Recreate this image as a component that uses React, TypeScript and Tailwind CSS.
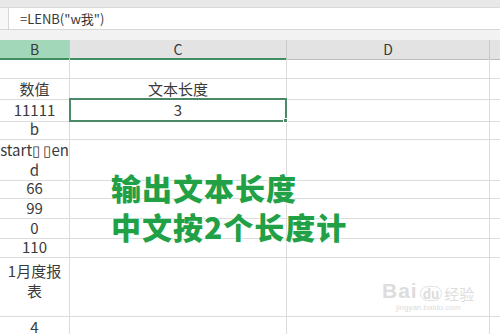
import React from 'react';

const FONT = '"Noto Sans CJK SC", "Noto Sans", sans-serif';

interface Row {
  h: number;
  b?: string[];
  c?: string;
  pt?: number;
  selected?: boolean;
}

const rows: Row[] = [
  { h: 20 },
  { h: 20, b: ['数值'], c: '文本长度' },
  { h: 20, b: ['11111'], c: '3', selected: true },
  { h: 20, b: ['b'] },
  { h: 39, b: ['start\u25AF \u25AFen', 'd'], pt: 1 },
  { h: 20, b: ['66'] },
  { h: 20, b: ['99'] },
  { h: 19, b: ['0'] },
  { h: 20, b: ['110'] },
  { h: 60, b: ['1月度报', '表'], pt: 4 },
  { h: 20, b: ['4'] },
  { h: 20 },
];

export default function App() {
  return (
    <div className="relative w-[500px] h-[334px] overflow-hidden bg-white text-[#3a3a3a]" style={{ fontFamily: FONT }}>
      {/* top strip */}
      <div className="h-[8px] bg-[#e8e8e8] border-b border-[#d9d9d9]" />
      {/* formula bar */}
      <div className="flex h-[22px] bg-white border-b border-[#d6d6d6]">
        <div className="w-[9px] border-r border-[#d6d6d6] bg-[#f7f7f7]" />
        <div className="pl-[11px] text-[13px] leading-[22px]">=LENB("w我")</div>
      </div>
      <div className="h-[10px] bg-[#f2f2f2]" />
      {/* column headers */}
      <div className="grid grid-cols-[70px_217px_203px_1fr] h-[19px] text-[14px] leading-[18px]">
        <div className="bg-[#a3d7b9] border-b-2 border-[#3f8f62] border-r border-r-[#c8c8c8] text-center">B</div>
        <div className="bg-[#e3e3e3] border-b-2 border-[#3f8f62] border-r border-r-[#c8c8c8] text-center">C</div>
        <div className="bg-[#e3e3e3] border-b border-[#bdbdbd] border-r border-r-[#c8c8c8] text-center">D</div>
        <div className="bg-[#e3e3e3] border-b border-[#bdbdbd]" />
      </div>
      {/* rows */}
      {rows.map((r, i) => (
        <div key={i} className="grid grid-cols-[70px_217px_203px_1fr] text-[15px]" style={{ height: r.h }}>
          <div className="border-b border-r border-[#dcdcdc] flex flex-col items-center justify-center leading-[20px] whitespace-nowrap"
            style={r.pt !== undefined ? { justifyContent: 'flex-start', paddingTop: r.pt } : undefined}>
            {r.b?.map((t, j) => <div key={j}>{t}</div>)}
          </div>
          <div className={r.selected
            ? 'relative border-2 border-[#4b8a68] -mt-[1px] -ml-[1px] flex items-center justify-center leading-[20px]'
            : 'border-b border-r border-[#dcdcdc] flex items-center justify-center leading-[20px]'}>
            {r.c}
            {r.selected && <div className="absolute -right-[3px] -bottom-[3px] w-[5px] h-[5px] bg-[#4b8a68] border border-white" />}
          </div>
          <div className="border-b border-r border-[#dcdcdc]" />
          <div className="border-b border-[#dcdcdc]" />
        </div>
      ))}

      {/* overlay caption */}
      <div className="absolute left-[111px] top-[168px] text-[30px] leading-[39px] font-black text-[#22a046] tracking-[1px]"
        style={{ textShadow: '0 0 2px #fff, 0 0 2px #fff, 1px 1px 1px #e8fff0' }}>
        <div>输出文本长度</div>
        <div>中文按2个长度计</div>
      </div>

      {/* watermark */}
      <div className="absolute left-[382px] top-[280px] flex flex-col items-center text-[#dddddd] leading-none">
        <div className="flex items-end gap-[2px]">
          <span className="text-[21px] font-bold tracking-[1px]" style={{ fontFamily: '"Liberation Sans", sans-serif' }}>Bai</span>
          <span className="text-[13px] font-bold rounded-full border border-[#e2e2e2] px-[2px]">du</span>
          <span className="text-[15px]">经验</span>
        </div>
        <div className="text-[8px] mt-[3px]" style={{ fontFamily: '"Liberation Sans", sans-serif' }}>jingyan.baidu.com</div>
      </div>
    </div>
  );
}
